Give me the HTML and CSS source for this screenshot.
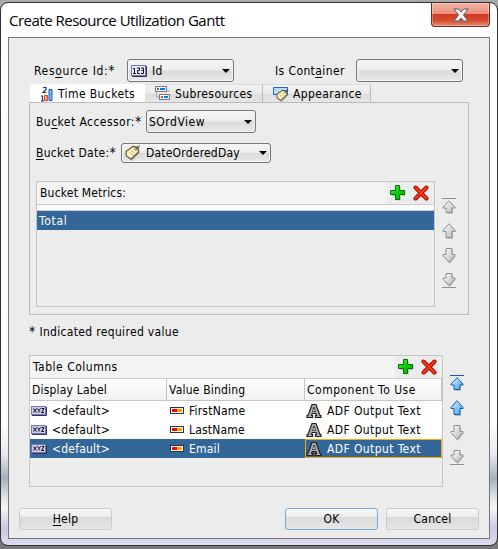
FILE: index.html
```html
<!DOCTYPE html>
<html lang="en">
<head>
  <meta charset="UTF-8">
  <title>Create Resource Utilization Gantt</title>
  <link rel="stylesheet" href="styles.css">
</head>
<body>
  <!-- shared icons -->
  <svg class="defs" width="0" height="0">
    <defs>
      <linearGradient id="gray" x2="1" y2="1"><stop offset="0" stop-color="#fff"/><stop offset="1" stop-color="#b4b4b4"/></linearGradient>
      <linearGradient id="blue" x2="1" y2="1"><stop offset="0" stop-color="#e4f6ff"/><stop offset="1" stop-color="#2d9cf5"/></linearGradient>
      <linearGradient id="green" x2="1" y2="1"><stop offset="0" stop-color="#5f5"/><stop offset=".5" stop-color="#0c0"/></linearGradient>
      <symbol id="plus" viewBox="0 0 16 16">
        <path d="M6.500 2h4.500v4.500h4.500V11H11v4.500H6.500V11H2V6.500h4.500z" fill="#aaa" opacity=".6"/>
        <path d="M5.500.5h4v5h5v4h-5v5h-4v-5h-5v-4h5z" fill="url(#green)" stroke="#006b00" stroke-linejoin="round"/>
      </symbol>
      <symbol id="cross" viewBox="0 0 16 16">
        <path d="M3 4l11 11M14 4L3 15" stroke="#aaa" stroke-width="3" opacity=".5"/>
        <path d="M2.500 2.500l11 11M13.500 2.500l-11 11" stroke="#900" stroke-width="4" stroke-linecap="round"/>
        <path d="M2.500 2.500l11 11M13.500 2.500l-11 11" stroke="#ff3a0c" stroke-width="2.200" stroke-linecap="round"/>
      </symbol>
      <symbol id="up" viewBox="0 0 16 16">
        <path d="M9 2l6 7h-3v7H6V9" fill="#888" opacity=".45" stroke="none"/>
        <path d="M8 .7l6 6.800v1h-3v6H5v-6H2v-1z" stroke-linejoin="round"/>
      </symbol>
      <symbol id="top" viewBox="0 0 16 16">
        <path d="M1 .5h14"/>
        <path d="M9 4l6 6h-3v6H6" fill="#888" opacity=".45" stroke="none"/>
        <path d="M8 2.800l6 6.200v1h-3v4.500H5V10H2V9z" stroke-linejoin="round"/>
      </symbol>
      <symbol id="down" viewBox="0 0 16 16">
        <path d="M6 2h6v6h3l-6 8-5-6z" fill="#888" opacity=".45" stroke="none"/>
        <path d="M5 .5h6v6h3v1.200l-6 6.500-6-6.500V6.500h3z" stroke-linejoin="round"/>
      </symbol>
      <symbol id="bottom" viewBox="0 0 16 16">
        <path d="M6 2h6v4h3l-6 8-5-5z" fill="#888" opacity=".45" stroke="none"/>
        <path d="M5 .5h6v4.500h3v1.200L8 12.500 2 6.200V5h3z" stroke-linejoin="round"/>
        <path d="M1 14.500h14"/>
      </symbol>
      <symbol id="tag" viewBox="0 0 16 16">
        <path d="M3 8.500L10 3l4 .5.800 4.500-8 8-4.300-3z" fill="#777" opacity=".5"/>
        <path d="M1 6.500L8 1.500l5 .5.500 5L6 14l-4.500-3z" fill="#fff8c8" stroke="#6d622d" stroke-width="1.300"/>
        <path d="M4.500 7l3.500 3.500M6.500 5.500L9.500 8.500" stroke="#e58a70"/>
        <circle cx="11" cy="4" r="1.300" fill="#fff" stroke="#555" stroke-width=".8"/>
        <path d="M11 4l4-3.500" stroke="#444"/>
      </symbol>
      <symbol id="xyz" viewBox="0 0 16 10">
        <path d="M1 9.500h14.500V1" stroke="#33335f" fill="none"/>
        <rect x=".5" y=".5" width="14" height="8" fill="#c9c9ee" stroke="#7777ae"/>
        <path d="M2.500 2.500l3 4m0-4l-3 4M6.500 2.500L8 4.500l1.500-2M8 4.500v2M10.500 2.500h2.500l-2.500 4H13" stroke="#111" fill="none"/>
      </symbol>
      <symbol id="attr" viewBox="0 0 14 7">
        <rect x=".5" y=".5" width="13" height="6" fill="#fff" stroke="#333"/>
        <path d="M2 2h5v3H2z" fill="#f00"/><path d="M7 2h5v3H7z" fill="#ff9a00"/>
      </symbol>
      <symbol id="output" viewBox="0 0 16 16">
        <path d="M6 1.500h4l4 11h1v2H9.500v-2h1l-.6-2H6.200l-.6 2h1v2H1v-2h1z" fill="#aaa" stroke="#222" stroke-width="1.200"/>
        <path d="M8 4l-1.500 4.500h3z" fill="#fff" stroke="#222" stroke-width=".8"/>
      </symbol>
    </defs>
  </svg>

  <div class="window">
    <div class="titlebar">
      <h1 class="title">Create Resource Utilization Gantt</h1>
      <button class="close">
        <svg width="16" height="14" viewBox="0 0 16 14"><path d="M1 1h4.500L8 4l2.500-3H15l-4.500 6 4.500 6h-4.500L8 10l-2.500 3H1l4.500-6z" fill="#f4f4f4" stroke="#555b70" stroke-linejoin="round"/></svg>
      </button>
    </div>

    <div class="content">
      <div class="top-row">
        <label class="label-resource">Res<u>o</u>urce Id:<span class="star">*</span></label>
        <div class="select select-id">
          <svg width="16" height="12" viewBox="0 0 16 12"><path d="M1 11.500h14.500V1" stroke="#33335f" fill="none"/><rect x=".5" y=".5" width="14" height="10" fill="#e8e8ff" stroke="#7777ae"/><path d="M2 3.500h1.500v5M2 8.500h3M6 3h2.500v2.500H6.500v3H9M10 3h2.500v5.500H10M10.500 5.500h2" fill="none" stroke="#111"/></svg>
          <span>Id</span><i class="arrow"></i>
        </div>
        <label class="label-container">Is Cont<u>a</u>iner</label>
        <div class="select select-container"><i class="arrow"></i></div>
      </div>

      <div class="tabs">
        <div class="tab tab-time active">
          <svg width="14" height="16" viewBox="0 0 14 16"><path d="M3 1.500h3v2L3 6.500h3.500M1 10h1.500v5M1 15h3" fill="none" stroke="#27306d" stroke-width="1.200"/><path d="M4.500 9.500h3v5h-3z" fill="#ffb08a" stroke="#e33b10"/><path d="M9 3.500h3v11H9z" fill="#79bfff" stroke="#135bb7"/></svg>
          <span>Time Buckets</span>
        </div>
        <div class="tab tab-sub">
          <svg width="16" height="15" viewBox="0 0 16 15"><path d="M1.500 6v5h4M12 5h3" stroke="#aaa" fill="none"/><rect x=".5" y=".5" width="11" height="5" fill="#fff" stroke="#7373a8"/><path d="M2 3h2" stroke="#b85a00" stroke-width="2"/><path d="M5 3h5" stroke="#0080e8" stroke-width="2"/><rect x="4.500" y="8.500" width="10" height="5" fill="#fff" stroke="#7373a8"/><path d="M6 11h2" stroke="#b85a00" stroke-width="2"/><path d="M9 11h4" stroke="#0080e8" stroke-width="2"/></svg>
          <span>Subresources</span>
        </div>
        <div class="tab tab-app">
          <svg width="16" height="16" viewBox="0 0 16 16"><path d="M.5 1.500h14v7H.5z" fill="#b9dcff" stroke="#2364c8"/><svg x="3" y="3" width="13" height="13"><use href="#tag"/></svg></svg>
          <span>Appearance</span>
        </div>
      </div>

      <div class="tab-panel">
        <div class="field">
          <label class="label-accessor">Bu<u>c</u>ket Accessor:<span class="star">*</span></label>
          <div class="select select-accessor"><span>SOrdView</span><i class="arrow"></i></div>
        </div>
        <div class="field field-date">
          <label class="label-date"><u>B</u>ucket Date:<span class="star">*</span></label>
          <div class="select select-date">
            <svg width="16" height="16"><use href="#tag"/></svg>
            <span>DateOrderedDay</span><i class="arrow"></i>
          </div>
        </div>
        <div class="with-order">
          <div class="metrics">
            <div class="box-header">
              <span>Bucket Metrics:</span>
              <div class="tools">
                <svg width="16" height="16"><use href="#plus"/></svg>
                <svg width="16" height="16"><use href="#cross"/></svg>
              </div>
            </div>
            <div class="strip"></div>
            <div class="metric selected">Total</div>
          </div>
          <div class="order">
            <svg class="off"><use href="#top"/></svg>
            <svg class="off"><use href="#up"/></svg>
            <svg class="off"><use href="#down"/></svg>
            <svg class="off"><use href="#bottom"/></svg>
          </div>
        </div>
      </div>

      <p class="note"><span class="star">*</span> Indicated required value</p>

      <div class="with-order">
        <div class="columns">
          <div class="box-header">
            <span class="wide">Table Columns</span>
            <div class="tools">
              <svg width="16" height="16"><use href="#plus"/></svg>
              <svg width="16" height="16"><use href="#cross"/></svg>
            </div>
          </div>
          <div class="row head">
            <div>Display Label</div><div>Value Binding</div><div class="wide">Component To Use</div>
          </div>
          <div class="row">
            <div><svg width="16" height="10"><use href="#xyz"/></svg><span>&lt;default&gt;</span></div>
            <div><svg width="14" height="7"><use href="#attr"/></svg><span>FirstName</span></div>
            <div><svg width="16" height="16"><use href="#output"/></svg><span class="adf">ADF Output Text</span></div>
          </div>
          <div class="row">
            <div><svg width="16" height="10"><use href="#xyz"/></svg><span>&lt;default&gt;</span></div>
            <div><svg width="14" height="7"><use href="#attr"/></svg><span>LastName</span></div>
            <div><svg width="16" height="16"><use href="#output"/></svg><span class="adf">ADF Output Text</span></div>
          </div>
          <div class="row selected">
            <div><svg width="16" height="10"><use href="#xyz"/></svg><span>&lt;default&gt;</span></div>
            <div><svg width="14" height="7"><use href="#attr"/></svg><span>Email</span></div>
            <div class="focus"><svg width="16" height="16"><use href="#output"/></svg><span class="adf">ADF Output Text</span></div>
          </div>
        </div>
        <div class="order">
          <svg class="on"><use href="#top"/></svg>
          <svg class="on"><use href="#up"/></svg>
          <svg class="off"><use href="#down"/></svg>
          <svg class="off"><use href="#bottom"/></svg>
        </div>
      </div>

      <div class="buttons">
        <button class="btn help"><u>H</u>elp</button>
        <button class="btn ok">OK</button>
        <button class="btn cancel">Cancel</button>
      </div>
    </div>
  </div>
</body>
</html>
```
FILE: styles.css
```css
* {
  box-sizing: border-box;
}
body {
  margin: 0;
  width: 498px;
  height: 549px;
  padding-top: 2px;
  overflow: hidden;
  background: linear-gradient(#a9a9a9, #999 20px, #777);
  font-family: "DejaVu Sans Condensed", "DejaVu Sans", sans-serif;
  font-stretch: condensed;
  font-size: 12px;
  line-height: 16px;
  letter-spacing: 0.2px;
  color: #000;
}
svg {
  flex: none;
  display: block;
  fill: none;
}
.defs {
  position: absolute;
}
u {
  text-underline-offset: 2px;
}
.star {
  font-size: 14px;
  line-height: 12px;
}
.wide {
  letter-spacing: 0.5px;
}

/* window frame */
.window {
  height: 544px;
  border: 1px solid #333;
  border-radius: 8px;
  padding: 0 7px;
  background: linear-gradient(#fff 0, #fdfdfd 420px, #e8ecf2 450px, #a5b0bf 475px, #e3e6ec 495px, #f4f4f8 505px, #c9c8e4 525px, #dfdff0 544px);
}
.titlebar {
  height: 34px;
  display: flex;
  justify-content: space-between;
  align-items: flex-start;
}
.title {
  margin: 7px 0 0 1px;
  font: 15px/20px "Open Sans", "Noto Sans", sans-serif;
  letter-spacing: -0.5px;
  white-space: nowrap;
}
.close {
  width: 59px;
  height: 24px;
  margin: 0;
  padding: 0;
  display: flex;
  justify-content: center;
  align-items: center;
  border: 1px solid #6b2a22;
  border-top: 0;
  border-radius: 0 0 4px 4px;
  background: linear-gradient(#f3b3a6, #e88d7b 48%, #cf3a22 50%, #d44a30 75%, #e88a70);
  box-shadow: inset 0 0 0 1px rgba(255, 255, 255, 0.3);
}
.content {
  height: 502px;
  border: 1px solid #777;
  background: #ececec;
  padding: 21px 0 0 20px;
}

/* form controls */
.top-row,
.field {
  display: flex;
  align-items: center;
  white-space: nowrap;
}
.top-row {
  height: 23px;
  padding-left: 5px;
}
.label-resource { width: 93px; letter-spacing: 0.65px; }
.label-container { width: 81px; margin-left: 41px; letter-spacing: 0.4px; }
.label-accessor { width: 110px; letter-spacing: 0.45px; }
.label-date { width: 85px; letter-spacing: 0.3px; }
.select {
  height: 23px;
  display: flex;
  align-items: center;
  gap: 5px;
  padding: 0 3px;
  border: 1px solid #777;
  border-radius: 3px;
  background: linear-gradient(#f6f6f6, #ececec 48%, #dadada 52%, #e9e9e9);
  box-shadow: inset 0 0 0 1px #f4f4f4;
}
.select-id,
.select-container {
  width: 107px;
}
.select-accessor {
  width: 110px;
  padding-left: 2px;
  letter-spacing: 0.5px;
}
.select-date {
  width: 150px;
  height: 20px;
}
.arrow {
  margin-left: auto;
  border: 4px solid transparent;
  border-top: 4px solid #000;
  border-bottom: 0;
}

/* tabs */
.tabs {
  display: flex;
  height: 18px;
  margin-top: 2px;
  padding-left: 1px;
}
.tab {
  display: flex;
  align-items: center;
  gap: 4px;
  border-right: 1px solid #bbb;
  border-top: 1px solid #ddd;
  background: linear-gradient(#f2f2f2, #e9e9e9 50%, #dcdcdc 52%, #e6e6e6);
  letter-spacing: 0.4px;
  white-space: nowrap;
}
.tab.active {
  background: #fff;
  border-color: #fff;
}
.tab-time { width: 115px; padding-left: 10px; }
.tab-sub { width: 118px; padding-left: 10px; }
.tab-app { width: 108px; padding-left: 10px; }
.tab-panel {
  width: 440px;
  height: 213px;
  padding: 7px 0 0 6px;
  border: 1px solid #bbb;
}
.field-date {
  margin-top: 10px;
}
.tab-panel .with-order {
  margin-top: 18px;
}

/* list and table */
.with-order {
  display: flex;
}
.metrics {
  width: 399px;
  height: 126px;
  border: 1px solid #c5c5c5;
}
.box-header {
  height: 23px;
  display: flex;
  justify-content: space-between;
  align-items: center;
  background: #f3f3f3;
  padding-left: 3px;
  border-bottom: 1px solid #ccc;
}
.tools {
  width: 47px;
  height: 22px;
  padding-left: 3px;
  display: flex;
  align-items: center;
  gap: 7px;
  background: #ececec;
}
.strip {
  height: 6px;
  border-bottom: 1px solid #ccc;
  background: #fafafa;
}
.metric {
  height: 19px;
  line-height: 20px;
  padding-left: 2px;
  letter-spacing: 0.7px;
}
.selected,
.row.selected {
  background: #336699;
  color: #fff;
}
.order {
  display: flex;
  flex-direction: column;
  gap: 9px;
  margin: 17px 0 0 6px;
}
.order svg {
  width: 16px;
  height: 16px;
}
.off {
  fill: url(#gray);
  stroke: #909090;
}
.on {
  fill: url(#blue);
  stroke: #1d5da8;
}
.note {
  margin: 9px 0 15px;
  height: 16px;
  letter-spacing: 0.33px;
}
.columns {
  width: 414px;
  height: 132px;
  border: 1px solid #c5c5c5;
}
.columns + .order {
  margin-top: 20px;
}
.row {
  display: grid;
  grid-template-columns: 137px 138px 137px;
  grid-template-rows: 100%;
  height: 19px;
  background: #fff;
}
.row > div {
  display: flex;
  align-items: center;
  gap: 5px;
  padding-left: 1px;
  white-space: nowrap;
}
.row > div:nth-child(2) {
  padding-left: 3px;
}
.row.head {
  height: 22px;
  border-bottom: 1px solid #c5c5c5;
  background: linear-gradient(#fff, #f1f1f1);
}
.row.head > div {
  padding-left: 2px;
  border-right: 1px solid #c5c5c5;
}
.row > .focus {
  border: 1px solid #ffa500;
  padding-left: 0;
}
.adf {
  letter-spacing: 0.4px;
}

/* bottom buttons */
.buttons {
  display: flex;
  margin: 21px 0 0 -10px;
}
.btn {
  width: 93px;
  height: 22px;
  padding: 0;
  font: inherit;
  letter-spacing: 0.2px;
  border: 1px solid #ccc;
  border-radius: 3px;
  background: linear-gradient(#f8f8f8, #ececec 38%, #d9d9d9 42%, #e6e6e6);
}
.help {
  margin-right: 173px;
}
.ok {
  margin-right: 8px;
  border-color: #7da7d9;
}
```
